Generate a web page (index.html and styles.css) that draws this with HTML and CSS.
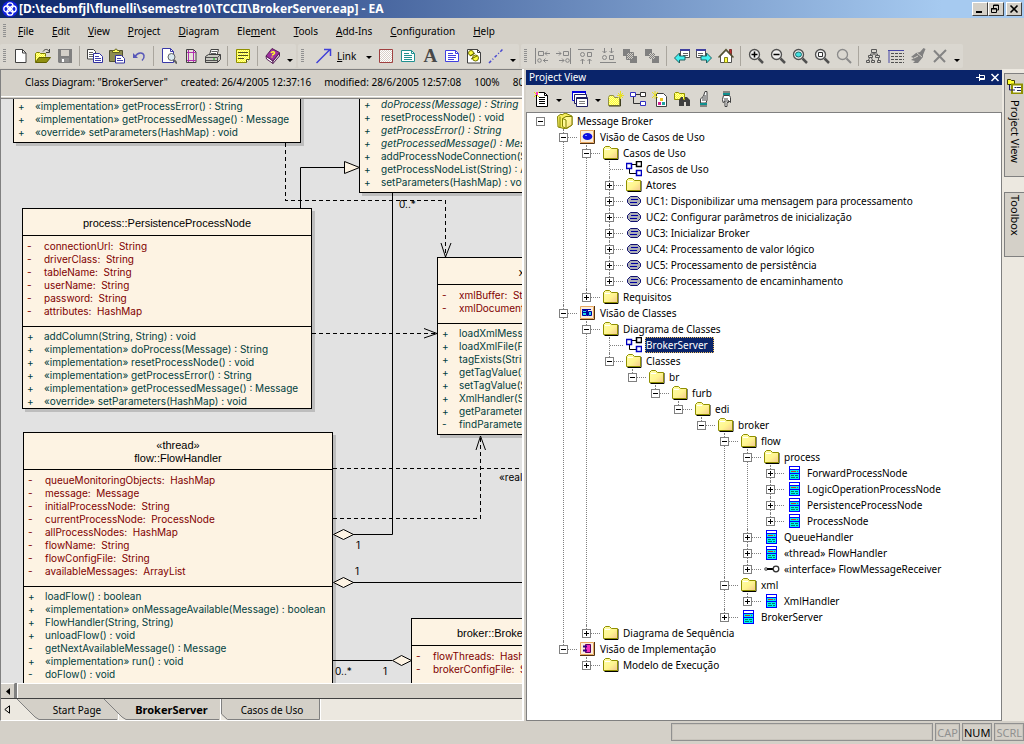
FILE: index.html
```html
<!DOCTYPE html>
<html lang="en">
<head>
<meta charset="utf-8">
<title>[D:\tecbmfjl\flunelli\semestre10\TCCII\BrokerServer.eap] - EA</title>
<link rel="stylesheet" href="styles.css">
</head>
<body>
<svg class="defs" aria-hidden="true">
  <defs>
    <pattern id="dith" width="2" height="2" patternUnits="userSpaceOnUse"><rect width="2" height="2" fill="#ffffa0"/><path d="M0 0h1v1H0zM1 1h1v1H1z" fill="#ffff30"/></pattern>
    <pattern id="dithg" width="2" height="2" patternUnits="userSpaceOnUse"><rect width="2" height="2" fill="#d4d0c8"/><path d="M0 0h1v1H0zM1 1h1v1H1z" fill="#808080"/></pattern>
    <pattern id="dithw" width="2" height="2" patternUnits="userSpaceOnUse"><rect width="2" height="2" fill="#fff"/><path d="M0 0h1v1H0zM1 1h1v1H1z" fill="#d8d0c8"/></pattern>
    <linearGradient id="fold" x1="0" y1="0" x2="1" y2="1"><stop offset="0" stop-color="#ffffa8"/><stop offset=".55" stop-color="#fff590"/><stop offset="1" stop-color="#f4c890"/></linearGradient>
  </defs>
  <symbol id="new" viewBox="0 0 16 16"><path d="M2.500 1.500h7l3.500 3.500v9.500H2.500z" fill="#fff" stroke="#404040"/><path d="M9.500 1.500v3.500H13" fill="none" stroke="#404040"/></symbol>
  <symbol id="open" viewBox="0 0 16 16"><path d="M.5 14V5.500l1-1h3l1 1h5v3" fill="url(#dith)" stroke="#808000"/><path d="M.5 14.500 4 9.500h11.500L11.500 14.500z" fill="#909010" stroke="#606000"/><path d="M8 3.500c2-3 5-2.500 6 0M14.500 1v3.500H11" fill="none" stroke="#404040"/></symbol>
  <symbol id="save" viewBox="0 0 16 16"><path d="M1 1h14v14H2l-1-1z" fill="#808080"/><path d="M4 2h8v6H4z" fill="#d4d0c8"/><path d="M4 10h8v4H4z" fill="#909090"/><path d="M5 11h2v3H5z" fill="#fff"/></symbol>
  <symbol id="copy" viewBox="0 0 16 16"><path d="M.5 1.500h6l2 2v7.500h-8z" fill="#fff" stroke="#404040"/><path d="M2 4.500h4M2 6.500h4M2 8.500h4" stroke="#606060"/><path d="M6.500 5.500h6l3 3v6h-9z" fill="#fff" stroke="#3030a0"/><path d="M8 8.500h4M8 10.500h6M8 12.500h6" stroke="#4040b0"/></symbol>
  <symbol id="paste" viewBox="0 0 16 16"><path d="M.5 2.500h13v11H.5z" fill="#8c8c50" stroke="#505030"/><path d="M3.500 4.500v-2h2l1-1.500h1l1 1.500h2v2z" fill="#ffff60" stroke="#606020"/><path d="M6.500 7.500h6l3 3v4.500h-9z" fill="#fff" stroke="#3030a0"/><path d="M8 10.500h4M8 12.500h6" stroke="#4040b0"/></symbol>
  <symbol id="undo" viewBox="0 0 16 16"><path d="M2 5v5h5z" fill="#5858b8"/><path d="M4 8.500C7 4 12 4 13 7.500c.5 2-.5 3.500-2 5" fill="none" stroke="#5858b8" stroke-width="1.500"/></symbol>
  <symbol id="preview" viewBox="0 0 16 16"><path d="M1.500.5h8l3 3v11h-11z" fill="#fff" stroke="#3838a8"/><path d="M9.500.5v3h3" fill="none" stroke="#3838a8"/><circle cx="10.500" cy="9" r="3.500" fill="#d8e8f0" stroke="#606060"/><path d="m13 12 3 3.500" stroke="#606060" stroke-width="2"/></symbol>
  <symbol id="page" viewBox="0 0 16 16"><path d="M3.500 1.500h7l2.500 2.500v10.500H3.500z" fill="#e8e4dc" stroke="#404040"/><path d="M5.500 2v12M10.500 2v12M4 4.500h9M4 12.500h9" stroke="#b030b0" fill="none"/></symbol>
  <symbol id="print" viewBox="0 0 16 16"><path d="m4.500 7 1.500-5.500h7.500L12 7z" fill="#fff" stroke="#404040"/><path d="M6.500 3.500H12M6 5.500h5" stroke="#606060"/><path d="m.5 8.500 3-2h12v5l-3 3H.5z" fill="#c8c8c0" stroke="#404040"/><path d="M.5 9.500h12v5M12.500 9.500l3-3M1 12.500h11" fill="none" stroke="#505050"/><path d="M8 11h2" stroke="#00c000"/></symbol>
  <symbol id="note" viewBox="0 0 16 16"><path d="M1.500 1.500h13v10l-3 3h-10z" fill="url(#dith)" stroke="#909000"/><path d="M3 4.500h10M3 7.500h10M3 10.500h6" stroke="#505020"/><path d="M11.500 14.500v-3h3" fill="#fff" stroke="#505020"/></symbol>
  <symbol id="book" viewBox="0 0 16 16"><path d="m1 8 7 5v2.500L1.500 11z" fill="#fff" stroke="#582058"/><path d="m8 13 6.500-8v3L8 15.500z" fill="#e0d8e0" stroke="#582058"/><path d="m1 8 6-7.500 7.500 4L8 13z" fill="#a030a0" stroke="#582058"/><path d="M6 5c1-2 4-1.500 3.500.2C9 6.500 7.500 6 7.500 7.500M6.500 9h1" fill="none" stroke="#ffff30" stroke-width="1.500"/></symbol>
  <symbol id="link" viewBox="0 0 16 16"><path d="M.5 15 14 1.500M8 1.500h6.500V8" fill="none" stroke="#4040d8" stroke-width="1.500"/></symbol>
  <symbol id="rect" viewBox="0 0 16 16"><path d="M1.500 1.500h13v13h-13z" fill="url(#dithw)" stroke="#a04040"/></symbol>
  <symbol id="tnote" viewBox="0 0 16 16"><path d="M1.500 2.500h10l3 3v8h-13z" fill="#fff" stroke="#209090"/><path d="M11.500 2.500v3h3M4 5.500h5M4 7.500h8M4 9.500h8M4 11.500h8" fill="none" stroke="#209090"/></symbol>
  <symbol id="bnote" viewBox="0 0 16 16"><path d="M1.500 2.500h10l3 3v8h-13z" fill="#fff" stroke="#4040e0"/><path d="M11.500 2.500v3h3M4 5.500h5M4 7.500h8M4 9.500h8M4 11.500h6" fill="none" stroke="#4040e0"/></symbol>
  <symbol id="doclink" viewBox="0 0 16 16"><path d="M1.500 1.500h10l3 3v10.500h-13z" fill="#fff" stroke="#404040"/><path d="M11.500 1.500v3h3" fill="none" stroke="#404040"/><circle cx="5" cy="5" r="2.500" fill="#ffff40" stroke="#707000"/><circle cx="9.500" cy="10" r="3" fill="#ffff40" stroke="#707000"/><path d="m4 8 5-3M5 11l6-3" stroke="#606000"/></symbol>
  <symbol id="dash" viewBox="0 0 16 16"><path d="M1 15 15 1" stroke="#4848d0" stroke-width="1.500" stroke-dasharray="3 2 1 2"/></symbol>
  <symbol id="al" viewBox="0 0 16 16"><path d="M1.500 0v16M4.500 3.500h5v4h-5zM11 5.500h5M13 3.500l-2 2 2 2M9 12.500h5M11.500 10.500l-2 2 2 2" fill="none" stroke="#868686"/><circle cx="5.500" cy="12.500" r="1.800" fill="none" stroke="#868686"/></symbol>
  <symbol id="ar" viewBox="0 0 16 16"><path d="M14.500 0v16M7.500 3.500h5v4h-5zM0 5.500h5M3 3.500l2 2-2 2M3 12.500h5M6 10.500l2 2-2 2" fill="none" stroke="#868686"/><circle cx="11.500" cy="12.500" r="1.800" fill="none" stroke="#868686"/></symbol>
  <symbol id="at" viewBox="0 0 16 16"><path d="M0 1.500h16M9.500 4.500h4v4h-4zM4.500 16v-5M2.500 13l2-2 2 2M11.500 16v-5M9.500 13l2-2 2 2" fill="none" stroke="#868686"/><circle cx="4.500" cy="6.500" r="2" fill="none" stroke="#868686"/></symbol>
  <symbol id="ab" viewBox="0 0 16 16"><path d="M0 14.500h16M9.500 7.500h4v4h-4zM4.500 0v5M2.500 3l2 2 2-2M11.500 0v5M9.500 3l2 2 2-2" fill="none" stroke="#868686"/><circle cx="4.500" cy="9.500" r="2" fill="none" stroke="#868686"/></symbol>
  <symbol id="front" viewBox="0 0 16 16"><path d="M1 1h7v7H1zM8 8h7v7H8z" fill="#808080"/><path d="M4.500 4.500h7v7h-7z" fill="url(#dithg)" stroke="#808080"/></symbol>
  <symbol id="backw" viewBox="0 0 16 16"><path d="M1 1h7v7H1zM8 8h7v7H8z" fill="#808080"/><path d="M5 5h6v6H5z" fill="url(#dithg)"/></symbol>
  <symbol id="prev" viewBox="0 0 16 16"><path d="M6.500 1.500h9v8h-9z" fill="#fff" stroke="#505050"/><path d="M6 2h10" stroke="#4040a0" stroke-width="2"/><path d="M9 5.500h5M9 7.500h5" stroke="#606060"/><path d="m.5 10 5-5v3H11v4H5.500v3z" fill="#40f0f0" stroke="#206060"/></symbol>
  <symbol id="next" viewBox="0 0 16 16"><path d="M.5 1.500h9v8h-9z" fill="#fff" stroke="#505050"/><path d="M0 2h10" stroke="#4040a0" stroke-width="2"/><path d="M2 5.500h5M2 7.500h5" stroke="#606060"/><path d="m15.500 10-5-5v3H5v4h5.500v3z" fill="#40f0f0" stroke="#206060"/></symbol>
  <symbol id="home" viewBox="0 0 16 16"><path d="M11.500 1.500h2v6h-2z" fill="#c03030" stroke="#803030"/><path d="M2.500 8v6.500h11V8L8 2.500z" fill="#fff" stroke="#505050"/><path d="m.5 9.500 7.500-8 7.500 8" fill="none" stroke="#505030" stroke-width="1.500"/><path d="M6.500 9.500h3v5h-3z" fill="#ffff40" stroke="#808020"/></symbol>
  <symbol id="mag" viewBox="0 0 16 16"><circle cx="6.500" cy="6.500" r="5" fill="#eee" stroke="#505050" stroke-width="1.300"/><path d="m10.500 10.500 4.500 4.500" stroke="#505050" stroke-width="2.500"/></symbol>
  <symbol id="zin" viewBox="0 0 16 16"><use href="#mag"/><path d="M3.500 6.500h6M6.500 3.500v6" stroke="#000" stroke-width="1.500"/></symbol>
  <symbol id="zout" viewBox="0 0 16 16"><use href="#mag"/><path d="M3.500 6.500h6" stroke="#000" stroke-width="1.500"/></symbol>
  <symbol id="zfit" viewBox="0 0 16 16"><use href="#mag"/><ellipse cx="6.500" cy="6.500" rx="3" ry="2.500" fill="#40e0e0" stroke="#206868"/></symbol>
  <symbol id="zpage" viewBox="0 0 16 16"><use href="#mag"/><path d="M4.500 4.500h4v4h-4z" fill="#fff" stroke="#303030"/></symbol>
  <symbol id="zoff" viewBox="0 0 16 16"><circle cx="6.500" cy="6.500" r="5" fill="none" stroke="#8a8a8a" stroke-width="1.300"/><path d="m10.500 10.500 4.500 4.500" stroke="#8a8a8a" stroke-width="2"/></symbol>
  <symbol id="hier" viewBox="0 0 16 16"><path d="M5.500 1.500h5v3h-5zM2.500 7.500h4v2h-4zM9.500 7.500h4v2h-4zM.5 12.500h3v2h-3zM5.500 12.500h3v2h-3zM11.500 12.500h3v2h-3zM8 5v1.500M4.500 7V6h7v1M2.500 12l1-2M6.500 12l-1-2M12.500 12v-2" fill="none" stroke="#585858"/></symbol>
  <symbol id="list" viewBox="0 0 16 16"><path d="M0 2.500h16M1 3v12" stroke="#4848a8"/><path d="M3 5.500h13M3 8.500h13M3 11.500h13M3 14.500h13" stroke="#505050" stroke-dasharray="3 1"/></symbol>
  <symbol id="brush" viewBox="0 0 16 16"><path d="m15.500 1-2-1-3.500 4-4 1-5 4 3 1-3 2 4 1-2 2h5l5-6V7z" fill="#808080"/><path d="m7 5 5 4M4 10l4-2" stroke="#d4d0c8"/></symbol>
  <symbol id="del" viewBox="0 0 16 16"><path d="M2 2.500 13 14M14 2 2 14" stroke="#848484" stroke-width="2"/></symbol>
  <symbol id="down" viewBox="0 0 8 16"><path d="M1 8h6L4 11z" fill="#000"/></symbol>

  <symbol id="pnew" viewBox="0 0 16 16"><path d="M3.500 1.500h8l3 3v11h-11z" fill="#fff" stroke="#000"/><path d="M11.500 1.500v3h3M6 6.500h6M6 8.500h6M6 10.500h6M6 12.500h6" fill="none" stroke="#000"/><path d="m1 1 5 5M6 1 1 6" stroke="#e8e000"/><path d="M3 1h2v3H3z" fill="#ff30c0"/></symbol>
  <symbol id="stack" viewBox="0 0 16 16"><path d="M.5.500h13v9H.5z" fill="#fff" stroke="#0000e0"/><path d="M0 1h14" stroke="#0000e0" stroke-width="2"/><path d="M2.500 3.500h12v9h-12z" fill="#fff" stroke="#202060"/><path d="M4.500 6.500h11v9h-11z" fill="#fff" stroke="#202060"/><path d="M4.500 7.500h11" stroke="#202060"/><path d="M7 10.500h6M7 12.500h6" stroke="#808080"/></symbol>
  <symbol id="pfold" viewBox="0 0 16 16"><path d="M.5 14.500V6.500l1-2h4l1 2h5v8z" fill="url(#dith)" stroke="#909040"/><path d="M12.500 7v8H1" fill="none" stroke="#404020"/><path d="m10 2 5 5m0-5-5 5M12.500 0v8M9 4.500h7" stroke="#e8e020"/></symbol>
  <symbol id="pdiag" viewBox="0 0 16 16"><path d="M5 3.500h5M3.500 6v6.500H10" fill="none" stroke="#303030"/><path d="M.5 1.500h5v4h-5zM10.500 10.500h5v4h-5z" fill="#fff" stroke="#3030c0"/><path d="M10.500 1.500h5v4h-5z" fill="#fff" stroke="#303030"/></symbol>
  <symbol id="pelem" viewBox="0 0 16 16"><path d="M4.500 2.500h7l3 3v10h-10z" fill="#fff" stroke="#404040"/><path d="m0 1 6 6m0-6L0 7M3 0v8" stroke="#e8e020"/><path d="M8 7h3v3H8z" fill="#e8c020"/><path d="M6 11h3v3H6z" fill="#d02090"/><path d="M10 11h3v3h-3z" fill="#20a0a0"/></symbol>
  <symbol id="find" viewBox="0 0 16 16"><path d="M.5 8.500v-6l1-1h3l1 1h5v6z" fill="url(#dith)" stroke="#909000"/><path d="M5 15V9l2-3h2v3h2V6h2l3 3v6h-4v-4h-2v4z" fill="#404040"/></symbol>
  <symbol id="hup" viewBox="0 0 16 16"><path d="M4.500 12V8l3-3 1.500-4.500h2V9l-1 3z" fill="#fff" stroke="#404040"/><path d="M9 4v6M7 6v4" stroke="#404040"/><path d="M4 13h7" stroke="#109090" stroke-width="2"/><path d="M4 15h7" stroke="#303030"/></symbol>
  <symbol id="hdown" viewBox="0 0 16 16"><path d="M5.500 4.500h6l1 2v5l-2-2v2H9v4H7v-5l-2 1-.5-3z" fill="#fff" stroke="#404040"/><path d="M7 7v4M9 7v4" stroke="#404040"/><path d="M5 3h7" stroke="#109090" stroke-width="2"/><path d="M5 1h7" stroke="#303030"/></symbol>

  <symbol id="root" viewBox="0 0 16 16"><path d="M.5 3.500 4 1l1 1 3-2 7 3v9l-6 4-8-2z" fill="#f8f060" stroke="#808000"/><path d="M5.500 5.500 9 3.500l6 0v8.500l-6 3.500-3.500-2z" fill="url(#fold)" stroke="#808000"/><path d="M3 3.500v11M5.500 5.500 9 7v8" fill="none" stroke="#808000"/></symbol>
  <symbol id="folder" viewBox="0 0 16 16"><path d="M15 4v10.500H1.500" fill="none" stroke="#000"/><path d="M.5 13.500V3.500l2-2h4l2 2h6v10z" fill="url(#fold)" stroke="#909000"/><path d="M2 4.500h5" stroke="#fff"/></symbol>
  <symbol id="vuse" viewBox="0 0 16 16"><path d="M14.500 1v13.500H0" fill="none" stroke="#503010"/><path d="M.5 1.500h13v12H.5z" fill="#fbeedd" stroke="#e8a860"/><ellipse cx="7.500" cy="7.500" rx="4.800" ry="3.600" fill="#1010e0"/><path d="M5 6.500h2" stroke="#80a0ff"/></symbol>
  <symbol id="vclass" viewBox="0 0 16 16"><path d="M14.500 1v13.500H0" fill="none" stroke="#503010"/><path d="M.5 1.500h13v12H.5z" fill="#fbeedd" stroke="#e8a860"/><path d="M2.500 5.500h4v5h-4zM8.500 6.500h3v4h-3z" fill="#20d8e8" stroke="#0000a0"/><path d="M2 4.500h5M8 4.500h3M7.500 4v7M3 7.500h3" stroke="#0000a0"/></symbol>
  <symbol id="vimpl" viewBox="0 0 16 16"><path d="M14.500 1v13.500H0" fill="none" stroke="#503010"/><path d="M.5 1.500h13v12H.5z" fill="#fbeedd" stroke="#e8a860"/><path d="M5.500 3.500h5v8h-5z" fill="#f030c0" stroke="#600060"/><path d="M3 5.500h4M3 9.500h4" stroke="#300080" stroke-width="2"/></symbol>
  <symbol id="diag" viewBox="0 0 16 16"><path d="M5 3.500h6M3.500 7v5.500H11" fill="none" stroke="#000"/><path d="M.5 2.500h5v5h-5zM10.500 9.500h5v5h-5z" fill="#fff" stroke="#0000c0" stroke-width="1.500"/><path d="M10.500.5h5v5h-5z" fill="#fff" stroke="#000" stroke-width="1.500"/></symbol>
  <symbol id="uc" viewBox="0 0 16 16"><path d="M4.500 3.500h7l3 3v3l-3 3h-7l-3-3v-3z" fill="#acaeb6" stroke="#101070"/><path d="M5 6.500h7M4 9.500h7" stroke="#0000a0"/></symbol>
  <symbol id="cls" viewBox="0 0 16 16"><g shape-rendering="crispEdges"><path d="M2.500 1.500h10v13h-10z" fill="#00f0f0" stroke="#0000ff"/><path d="M3 2h9v2H3z" fill="#fff"/><path d="M3 4.500h9M3 8.500h9" stroke="#0000ff"/><path d="M4 6.500h5M10 6.500h1" stroke="#c04020"/><path d="M4 10.500h3M8 10.500h3M4 12.500h4M9 12.500h2" stroke="#008060"/></g></symbol>
  <symbol id="iface" viewBox="0 0 16 16"><circle cx="2" cy="8" r="1.500" fill="#909090" stroke="#808080"/><path d="M3 8h6" stroke="#000" stroke-width="2"/><circle cx="12" cy="8" r="2.800" fill="#fff" stroke="#303030" stroke-width="1.300"/></symbol>
  <symbol id="tabico" viewBox="0 0 16 16"><path d="M.5 6.500v-5h3l1 1h3v4z" fill="#ffff30" stroke="#404000"/><path d="M5 6.500h10v9H5z" fill="#fff" stroke="#909000" stroke-width="2"/><path d="M2.500 7v5H8M7.500 9.500h2M10 9.500h4M10 12.500h4" stroke="#202060" fill="none"/></symbol>
</svg>

<header class="titlebar">
  <svg class="logo" viewBox="0 0 16 16"><circle cx="8" cy="8" r="8" fill="#1020e0"/><g fill="none" stroke="#fff" stroke-width="1.300"><circle cx="8" cy="4.800" r="3"/><circle cx="11.200" cy="8" r="3"/><circle cx="8" cy="11.200" r="3"/><circle cx="4.800" cy="8" r="3"/></g></svg>
  <h1>[D:\tecbmfjl\flunelli\semestre10\TCCII\BrokerServer.eap] - EA</h1>
  <div class="winbtns">
    <button aria-label="Minimize"><svg viewBox="0 0 12 10"><path d="M2 8h6" stroke="#000" stroke-width="2"/></svg></button>
    <button aria-label="Restore"><svg viewBox="0 0 12 10"><path d="M3.500 4V1h5v5H7M3 1.500h6" fill="none" stroke="#000"/><path d="M1.500 4.500h5v4h-5zM1 5h6" fill="none" stroke="#000"/></svg></button>
    <button class="close" aria-label="Close"><svg viewBox="0 0 12 10"><path d="m2.500 1.500 7 7m0-7-7 7" stroke="#000" stroke-width="1.600"/></svg></button>
  </div>
</header>

<nav class="menubar">
  <i class="grip"></i>
  <button><u>F</u>ile</button><button><u>E</u>dit</button><button><u>V</u>iew</button><button><u>P</u>roject</button><button><u>D</u>iagram</button><button>Ele<u>m</u>ent</button><button><u>T</u>ools</button><button><u>A</u>dd-Ins</button><button><u>C</u>onfiguration</button><button><u>H</u>elp</button>
</nav>

<div class="toolbars">
  <div class="toolbar">
    <i class="grip"></i>
    <button aria-label="New"><svg><use href="#new"/></svg></button>
    <button aria-label="Open"><svg><use href="#open"/></svg></button>
    <button aria-label="Save"><svg><use href="#save"/></svg></button>
    <i class="sep"></i>
    <button aria-label="Copy"><svg><use href="#copy"/></svg></button>
    <button aria-label="Paste"><svg><use href="#paste"/></svg></button>
    <button aria-label="Undo"><svg><use href="#undo"/></svg></button>
    <i class="sep"></i>
    <button aria-label="Print preview"><svg><use href="#preview"/></svg></button>
    <button aria-label="Page setup"><svg><use href="#page"/></svg></button>
    <button aria-label="Print"><svg><use href="#print"/></svg></button>
    <i class="sep"></i>
    <button aria-label="Note"><svg><use href="#note"/></svg></button>
    <i class="sep"></i>
    <button aria-label="Help"><svg><use href="#book"/></svg></button>
    <button class="drop low" aria-label="More"><svg><use href="#down"/></svg></button>
  </div>
  <div class="toolbar">
    <i class="grip"></i>
    <button class="linkbtn"><svg><use href="#link"/></svg><span><u>L</u>ink</span></button>
    <button class="drop" aria-label="Link types"><svg><use href="#down"/></svg></button>
    <button aria-label="Boundary"><svg><use href="#rect"/></svg></button>
    <button aria-label="Note element"><svg><use href="#tnote"/></svg></button>
    <button class="letter" aria-label="Text">A</button>
    <button aria-label="Diagram note"><svg><use href="#bnote"/></svg></button>
    <button aria-label="Hyperlink"><svg><use href="#doclink"/></svg></button>
    <button aria-label="Note link"><svg><use href="#dash"/></svg></button>
    <button class="drop low" aria-label="More"><svg><use href="#down"/></svg></button>
  </div>
  <div class="toolbar">
    <i class="grip"></i>
    <button aria-label="Align left"><svg><use href="#al"/></svg></button>
    <button aria-label="Align right"><svg><use href="#ar"/></svg></button>
    <button aria-label="Align top"><svg><use href="#at"/></svg></button>
    <button aria-label="Align bottom"><svg><use href="#ab"/></svg></button>
    <button aria-label="Bring to front"><svg><use href="#front"/></svg></button>
    <button aria-label="Send to back"><svg><use href="#backw"/></svg></button>
    <i class="sep"></i>
    <button aria-label="Previous"><svg><use href="#prev"/></svg></button>
    <button aria-label="Next"><svg><use href="#next"/></svg></button>
    <button aria-label="Home"><svg><use href="#home"/></svg></button>
    <i class="sep"></i>
    <button aria-label="Zoom in"><svg><use href="#zin"/></svg></button>
    <button aria-label="Zoom out"><svg><use href="#zout"/></svg></button>
    <button aria-label="Fit to window"><svg><use href="#zfit"/></svg></button>
    <button aria-label="Fit to page"><svg><use href="#zpage"/></svg></button>
    <button aria-label="Zoom 100%"><svg><use href="#zoff"/></svg></button>
    <i class="sep"></i>
    <button aria-label="Layout"><svg><use href="#hier"/></svg></button>
    <button aria-label="Properties"><svg><use href="#list"/></svg></button>
    <button aria-label="Format"><svg><use href="#brush"/></svg></button>
    <button aria-label="Delete"><svg><use href="#del"/></svg></button>
    <button class="drop low" aria-label="More"><svg><use href="#down"/></svg></button>
  </div>
</div>

<main class="work">
  <section class="editor">
    <div class="info"><span>Class Diagram: "BrokerServer"</span><span>created: 26/4/2005 12:37:16</span><span>modified: 28/6/2005 12:57:08</span><span>100%</span><span>800 x 1100</span></div>
    <div class="canvas">
      <article class="uml" style="left:12px;top:-3px;width:288px">
        <ul class="ops">
          <li><b>+</b>«implementation» getProcessError() : String</li>
          <li><b>+</b>«implementation» getProcessedMessage() : Message</li>
          <li><b>+</b>«override» setParameters(HashMap) : void</li>
        </ul>
      </article>

      <article class="uml" style="left:358px;top:-5px;width:290px">
        <ul class="ops">
          <li class="abs"><b>+</b>doProcess(Message) : String</li>
          <li><b>+</b>resetProcessNode() : void</li>
          <li class="abs"><b>+</b>getProcessError() : String</li>
          <li class="abs"><b>+</b>getProcessedMessage() : Message</li>
          <li><b>+</b>addProcessNodeConnection(String) : void</li>
          <li><b>+</b>getProcessNodeList(String) : ArrayList</li>
          <li><b>+</b>setParameters(HashMap) : void</li>
        </ul>
      </article>

      <article class="uml" style="left:21px;top:109px;width:290px">
        <h2>process::PersistenceProcessNode</h2>
        <ul class="attrs">
          <li><b>-</b>connectionUrl:&nbsp; String</li>
          <li><b>-</b>driverClass:&nbsp; String</li>
          <li><b>-</b>tableName:&nbsp; String</li>
          <li><b>-</b>userName:&nbsp; String</li>
          <li><b>-</b>password:&nbsp; String</li>
          <li><b>-</b>attributes:&nbsp; HashMap</li>
        </ul>
        <ul class="ops tight">
          <li><b>+</b>addColumn(String, String) : void</li>
          <li><b>+</b>«implementation» doProcess(Message) : String</li>
          <li><b>+</b>«implementation» resetProcessNode() : void</li>
          <li><b>+</b>«implementation» getProcessError() : String</li>
          <li><b>+</b>«implementation» getProcessedMessage() : Message</li>
          <li><b>+</b>«override» setParameters(HashMap) : void</li>
        </ul>
      </article>

      <article class="uml" style="left:22px;top:333px;width:310px">
        <h2 class="two">«thread»<br>flow::FlowHandler</h2>
        <ul class="attrs">
          <li><b>-</b>queueMonitoringObjects:&nbsp; HashMap</li>
          <li><b>-</b>message:&nbsp; Message</li>
          <li><b>-</b>initialProcessNode:&nbsp; String</li>
          <li><b>-</b>currentProcessNode:&nbsp; ProcessNode</li>
          <li><b>-</b>allProcessNodes:&nbsp; HashMap</li>
          <li><b>-</b>flowName:&nbsp; String</li>
          <li><b>-</b>flowConfigFile:&nbsp; String</li>
          <li><b>-</b>availableMessages:&nbsp; ArrayList</li>
        </ul>
        <ul class="ops">
          <li><b>+</b>loadFlow() : boolean</li>
          <li><b>+</b>«implementation» onMessageAvailable(Message) : boolean</li>
          <li><b>+</b>FlowHandler(String, String)</li>
          <li><b>+</b>unloadFlow() : void</li>
          <li><b>-</b>getNextAvailableMessage() : Message</li>
          <li><b>+</b>«implementation» run() : void</li>
          <li><b>-</b>doFlow() : void</li>
          <li></li>
        </ul>
      </article>

      <article class="uml" style="left:436px;top:158px;width:244px">
        <h2>xml::XmlHandler</h2>
        <ul class="attrs">
          <li><b>-</b>xmlBuffer:&nbsp; StringBuffer</li>
          <li><b>-</b>xmlDocument:&nbsp; Document</li>
        </ul>
        <ul class="ops">
          <li><b>+</b>loadXmlMessage(String) : void</li>
          <li><b>+</b>loadXmlFile(File) : void</li>
          <li><b>+</b>tagExists(String) : boolean</li>
          <li><b>+</b>getTagValue(String) : String</li>
          <li><b>+</b>setTagValue(String) : void</li>
          <li><b>+</b>XmlHandler(String)</li>
          <li><b>+</b>getParameter(String) : String</li>
          <li><b>-</b>findParameter(String) : Node</li>
        </ul>
      </article>

      <article class="uml" style="left:410px;top:519px;width:194px">
        <h2>broker::BrokerServer</h2>
        <ul class="attrs">
          <li><b>-</b>flowThreads:&nbsp; HashMap</li>
          <li><b>-</b>brokerConfigFile:&nbsp; String</li>
          <li></li>
        </ul>
      </article>

      <svg class="wires">
        <g transform="translate(-1 -99)" fill="none" stroke="#000">
          <path class="dashed" d="M285.500 143v57.500h160V257"/>
          <path d="m441 243 4.500 14 5.500-14"/>
          <path d="M300.500 208v-40.500H344"/>
          <path class="fill" d="M344.500 161.500v12l15-6z"/>
          <path d="M392.500 193v341.500H353"/>
          <path class="dashed" d="M312 333.500h125"/>
          <path d="m424 328.500 13 5-13 4.500"/>
          <path class="dashed" d="M333 468.500h192"/>
          <path class="dashed" d="M333 518.500h147.500V436"/>
          <path d="m476 450 4.500-14 5 14"/>
          <path class="fill" d="m333.500 534.500 10-5 10 5-10 5z"/>
          <path class="fill" d="m333.500 582.500 10-5 10 5-10 5zM353 582.500h172"/>
          <path d="M333 660.500h59"/>
          <path class="fill" d="m392.500 660.500 9-5 10 5-10 5z"/>
        </g>
        <g transform="translate(-1 -99)" class="ends">
          <text x="399" y="208">0..*</text>
          <text x="499" y="481">«realize»</text>
          <text x="356" y="549">1</text>
          <text x="355" y="575">1</text>
          <text x="335" y="675">0..*</text>
          <text x="383" y="675">1</text>
        </g>
      </svg>
    </div>
    <div class="hscroll">
      <button aria-label="Scroll left"><svg viewBox="0 0 4 7"><path d="M4 0v7L0 3.500z"/></svg></button>
      <div class="thumb"></div>
    </div>
    <div class="tabs">
      <button class="scrolltabs" aria-label="Previous tabs"><svg viewBox="0 0 6 9"><path d="M5.500.8v7.400L.8 4.500z" fill="none" stroke="#000"/></svg></button>
      <button class="tab first"><svg viewBox="0 0 102 21"><path d="M0 0l18 18 4 3h79V0z" fill="#d4d0c8"/><path d="M0 0l18 18 4 2.500h78" fill="none" stroke="#808080"/><path d="M101.500 14v7" stroke="#fff"/></svg>Start Page</button>
      <button class="tab active"><svg viewBox="0 0 117 21"><path d="M0 0l18 18 4 3h94V0z" fill="#d4d0c8"/><path d="M0 0l18 18 4 2.500h93" fill="none" stroke="#808080"/><path d="M116.500 0v21" stroke="#fff"/></svg>BrokerServer</button>
      <button class="tab last"><svg viewBox="0 0 100 21"><path d="M0 0v15l6 6h93V0z" fill="#d4d0c8"/><path d="M.5 0v15l6 5.500h92V0" fill="none" stroke="#808080"/><path d="M99.500 0v21" stroke="#fff"/></svg>Casos de Uso</button>
    </div>
  </section>

  <aside class="project">
    <div class="ptitle"><h2>Project View</h2>
      <button aria-label="Pin"><svg viewBox="0 0 10 9"><path d="M0 4.500h3M3.500 1v7M3.500 2.500h5v4h-5M3.500 5.500h5" fill="none" stroke="#fff"/></svg></button>
      <button aria-label="Close panel"><svg viewBox="0 0 10 9"><path d="m1.500 1 7 7m0-7-7 7" stroke="#fff" stroke-width="1.500"/></svg></button>
    </div>
    <div class="ptools">
      <button aria-label="New view"><svg><use href="#pnew"/></svg></button><button class="drop" aria-label="New view options"><svg><use href="#down"/></svg></button>
      <button class="gap" aria-label="Windows"><svg><use href="#stack"/></svg></button><button class="drop" aria-label="Window options"><svg><use href="#down"/></svg></button>
      <button aria-label="New package"><svg><use href="#pfold"/></svg></button>
      <button aria-label="New diagram"><svg><use href="#pdiag"/></svg></button>
      <button aria-label="New element"><svg><use href="#pelem"/></svg></button>
      <button aria-label="Find"><svg><use href="#find"/></svg></button>
      <button aria-label="Move up"><svg><use href="#hup"/></svg></button>
      <button aria-label="Move down"><svg><use href="#hdown"/></svg></button>
    </div>
    <div class="treebox">
      <ul class="tree">
        <li><div class="row"><button class="ex" aria-label="Collapse"></button><svg><use href="#root"/></svg><span>Message Broker</span></div>
        <ul>
          <li><div class="row"><button class="ex" aria-label="Collapse"></button><svg><use href="#vuse"/></svg><span>Visão de Casos de Uso</span></div>
          <ul>
            <li><div class="row"><button class="ex" aria-label="Collapse"></button><svg><use href="#folder"/></svg><span>Casos de Uso</span></div>
            <ul>
              <li><div class="row leaf"><svg><use href="#diag"/></svg><span>Casos de Uso</span></div></li>
              <li><div class="row"><button class="ex plus" aria-label="Expand"></button><svg><use href="#folder"/></svg><span>Atores</span></div></li>
              <li><div class="row"><button class="ex plus" aria-label="Expand"></button><svg><use href="#uc"/></svg><span>UC1: Disponibilizar uma mensagem para processamento</span></div></li>
              <li><div class="row"><button class="ex plus" aria-label="Expand"></button><svg><use href="#uc"/></svg><span>UC2: Configurar parâmetros de inicialização</span></div></li>
              <li><div class="row"><button class="ex plus" aria-label="Expand"></button><svg><use href="#uc"/></svg><span>UC3: Inicializar Broker</span></div></li>
              <li><div class="row"><button class="ex plus" aria-label="Expand"></button><svg><use href="#uc"/></svg><span>UC4: Processamento de valor lógico</span></div></li>
              <li><div class="row"><button class="ex plus" aria-label="Expand"></button><svg><use href="#uc"/></svg><span>UC5: Processamento de persistência</span></div></li>
              <li><div class="row"><button class="ex plus" aria-label="Expand"></button><svg><use href="#uc"/></svg><span>UC6: Processamento de encaminhamento</span></div></li>
            </ul></li>
            <li><div class="row"><button class="ex plus" aria-label="Expand"></button><svg><use href="#folder"/></svg><span>Requisitos</span></div></li>
          </ul></li>
          <li><div class="row"><button class="ex" aria-label="Collapse"></button><svg><use href="#vclass"/></svg><span>Visão de Classes</span></div>
          <ul>
            <li><div class="row"><button class="ex" aria-label="Collapse"></button><svg><use href="#folder"/></svg><span>Diagrama de Classes</span></div>
            <ul>
              <li><div class="row leaf"><svg><use href="#diag"/></svg><span class="sel">BrokerServer</span></div></li>
              <li><div class="row"><button class="ex" aria-label="Collapse"></button><svg><use href="#folder"/></svg><span>Classes</span></div>
              <ul><li><div class="row"><button class="ex" aria-label="Collapse"></button><svg><use href="#folder"/></svg><span>br</span></div>
              <ul><li><div class="row"><button class="ex" aria-label="Collapse"></button><svg><use href="#folder"/></svg><span>furb</span></div>
              <ul><li><div class="row"><button class="ex" aria-label="Collapse"></button><svg><use href="#folder"/></svg><span>edi</span></div>
              <ul><li><div class="row"><button class="ex" aria-label="Collapse"></button><svg><use href="#folder"/></svg><span>broker</span></div>
              <ul>
                <li><div class="row"><button class="ex" aria-label="Collapse"></button><svg><use href="#folder"/></svg><span>flow</span></div>
                <ul>
                  <li><div class="row"><button class="ex" aria-label="Collapse"></button><svg><use href="#folder"/></svg><span>process</span></div>
                  <ul>
                    <li><div class="row"><button class="ex plus" aria-label="Expand"></button><svg><use href="#cls"/></svg><span>ForwardProcessNode</span></div></li>
                    <li><div class="row"><button class="ex plus" aria-label="Expand"></button><svg><use href="#cls"/></svg><span>LogicOperationProcessNode</span></div></li>
                    <li><div class="row"><button class="ex plus" aria-label="Expand"></button><svg><use href="#cls"/></svg><span>PersistenceProcessNode</span></div></li>
                    <li><div class="row"><button class="ex plus" aria-label="Expand"></button><svg><use href="#cls"/></svg><span>ProcessNode</span></div></li>
                  </ul></li>
                  <li><div class="row"><button class="ex plus" aria-label="Expand"></button><svg><use href="#cls"/></svg><span>QueueHandler</span></div></li>
                  <li><div class="row"><button class="ex plus" aria-label="Expand"></button><svg><use href="#cls"/></svg><span>«thread» FlowHandler</span></div></li>
                  <li><div class="row"><button class="ex plus" aria-label="Expand"></button><svg><use href="#iface"/></svg><span>«interface» FlowMessageReceiver</span></div></li>
                </ul></li>
                <li><div class="row"><button class="ex" aria-label="Collapse"></button><svg><use href="#folder"/></svg><span>xml</span></div>
                <ul>
                  <li><div class="row"><button class="ex plus" aria-label="Expand"></button><svg><use href="#cls"/></svg><span>XmlHandler</span></div></li>
                </ul></li>
                <li><div class="row"><button class="ex plus" aria-label="Expand"></button><svg><use href="#cls"/></svg><span>BrokerServer</span></div></li>
              </ul></li></ul></li></ul></li></ul></li></ul></li>
            </ul></li>
            <li><div class="row"><button class="ex plus" aria-label="Expand"></button><svg><use href="#folder"/></svg><span>Diagrama de Sequência</span></div></li>
          </ul></li>
          <li><div class="row"><button class="ex" aria-label="Collapse"></button><svg><use href="#vimpl"/></svg><span>Visão de Implementação</span></div>
          <ul>
            <li><div class="row"><button class="ex plus" aria-label="Expand"></button><svg><use href="#folder"/></svg><span>Modelo de Execução</span></div></li>
          </ul></li>
        </ul></li>
      </ul>
    </div>
  </aside>

  <nav class="side">
    <button><svg><use href="#tabico"/></svg><span>Project View</span></button>
    <button class="plain"><span>Toolbox</span></button>
  </nav>
</main>

<footer class="status">
  <div class="cell msg"></div><div class="cell off">CAP</div><div class="cell">NUM</div><div class="cell off">SCRL</div>
</footer>
</body>
</html>
```
FILE: styles.css
```css
* { box-sizing: border-box; }
html, body { height: 100%; }
body {
  margin: 0;
  display: flex;
  flex-direction: column;
  overflow: hidden;
  background: #d4d0c8;
  color: #000;
  font: 10px/16px "Noto Sans", sans-serif;
}
button {
  margin: 0; padding: 0; border: 0;
  background: none; color: inherit; font: inherit;
}
ul { list-style: none; margin: 0; padding: 0; }
h1, h2 { margin: 0; }
svg { display: block; flex: none; }
.defs { position: absolute; width: 0; height: 0; }

/* Title bar */
.titlebar {
  flex: none;
  display: flex; align-items: center; gap: 1px;
  height: 18px; padding: 0 2px;
  background: linear-gradient(90deg, #0a246a, #a6caf0 92%);
  color: #fff;
}
.logo { width: 16px; height: 16px; }
.titlebar h1 { flex: 1; font-size: 12px; line-height: 18px; white-space: nowrap; overflow: hidden; }
.winbtns { display: flex; gap: 0; }
.winbtns button {
  width: 16px; height: 14px; padding: 1px 1px;
  background: #d4d0c8;
  border: 1px solid; border-color: #fff #404040 #404040 #fff;
}
.winbtns .close { margin-left: 2px; }
.winbtns svg { width: 12px; height: 10px; }

/* Menu */
.menubar { flex: none; display: flex; align-items: center; gap: 18px; height: 26px; padding-left: 3px; }
.grip {
  flex: none; width: 3px; height: 14px;
  background: repeating-linear-gradient(#909090 0 1px, transparent 1px 2px);
}
.menubar .grip { margin-right: -6px; }
.menubar button { line-height: 16px; }

/* Toolbars */
.toolbars { flex: none; display: flex; height: 25px; gap: 2px; padding: 0 0 1px; }
.toolbar { display: flex; align-items: center; background: #dad7d0; padding-left: 3px; border-radius: 2px; }
.toolbar .grip { margin-right: 4px; }
.toolbar button { flex: none; width: 22px; height: 22px; display: flex; align-items: center; justify-content: center; }
.toolbar svg, .ptools svg { width: 16px; height: 16px; }
.toolbar .drop, .ptools .drop { width: 12px; }
.toolbar .drop svg, .ptools .drop svg { width: 8px; height: 16px; }
.toolbar .low { align-items: flex-end; }
.toolbar .linkbtn { width: auto; gap: 5px; padding: 0 7px 0 8px; }
.toolbar .letter { font: bold 19px "Liberation Serif", serif; color: #484848; }
.sep { flex: none; width: 1px; height: 20px; margin: 0 4px 0 3px; background: #aaa69e; }

/* Work area */
.work { flex: 1; display: flex; min-height: 0; }
.editor {
  flex: 1; min-width: 0;
  display: flex; flex-direction: column;
  border-left: 1px solid #808080;
  border-right: 2px solid #fff;
  border-bottom: 1px solid #fff;
  margin-right: 2px;
}
.info {
  flex: none; display: flex; align-items: center; gap: 13px;
  height: 28px; padding: 0 0 2px 24px; margin-bottom: 1px;
  border-top: 1px solid #808080; border-bottom: 1px solid #fff;
  white-space: nowrap; overflow: hidden;
}
.canvas {
  flex: 1; min-height: 0; position: relative; overflow: hidden;
  border-top: 1px solid #808080;
  background: #e2e2e2;
}
.wires { position: absolute; top: 0; left: 0; width: 100%; height: 100%; }
.wires .dashed { stroke-dasharray: 4 3; shape-rendering: crispEdges; }
.wires .fill { fill: #fdf3e3; }
.ends { font: 10px Inter, sans-serif; }
.uml {
  position: absolute;
  border: 1px solid #000;
  background: #fdf3e3;
  box-shadow: 3px 3px 0 #bdbdbd;
  font: 10px/13px Inter, sans-serif;
  white-space: nowrap;
}
.uml h2 {
  padding: 8px 0 5px;
  font: 11px/13px "Liberation Sans", sans-serif;
  text-align: center;
}
.uml .two { padding: 6px 0 4px; }
.uml li { display: flex; height: 13px; }
.uml b { flex: none; width: 18px; padding-left: 1px; font-weight: inherit; }
.uml .abs { font-style: italic; }
.attrs { padding: 4px 3px 8px; color: #800000; border-top: 1px solid #000; }
.ops { padding: 3px; color: #004040; }
.tight { padding-bottom: 0; }
.attrs + .ops { border-top: 1px solid #000; }

.hscroll { flex: none; display: flex; gap: 2px; height: 16px; border-bottom: 1px solid #404040; background: #808080; }
.hscroll button { width: 14px; padding: 0 4px 0 5px; background: #d4d0c8; border-top: 1px solid #fff; border-right: 1px solid #808080; }
.hscroll button svg { width: 4px; height: 7px; }
.thumb { flex: 1; background: #d4d0c8; border-top: 1px solid #fff; border-left: 1px solid #fff; }

.tabs { flex: none; display: flex; height: 21px; background: #ece8e0; }
.scrolltabs { width: 16px; padding-left: 3px; }
.scrolltabs svg { width: 6px; height: 9px; }
.tab { position: relative; z-index: 0; line-height: 20px; }
.tab svg { position: absolute; z-index: -1; left: 0; top: 0; width: 100%; height: 21px; }
.first { width: 102px; padding-left: 18px; }
.active { width: 117px; margin-left: -15px; padding-left: 18px; font-weight: bold; font-size: 11px; }
.last { width: 100px; padding-left: 2px; }

/* Project panel */
.project { flex: none; width: 476px; display: flex; flex-direction: column; padding-top: 1px; }
.ptitle { flex: none; display: flex; align-items: center; height: 15px; padding: 0 2px 0 3px; gap: 4px; background: #0a246a; color: #fff; }
.ptitle h2 { flex: 1; font-size: 10px; line-height: 15px; font-weight: normal; }
.ptitle svg { width: 10px; height: 9px; }
.ptools { flex: none; display: flex; align-items: center; height: 27px; padding-left: 4px; background: #dad7d0; }
.ptools button { flex: none; width: 22px; display: flex; justify-content: center; }
.ptools .drop { width: 14px; }
.ptools .gap { margin-left: 3px; }
.treebox { flex: 1; min-height: 0; padding-left: 2px; background: #fff; border: 1px solid #808080; overflow: hidden; }
.tree ul { margin-left: 23px; }
.tree li { position: relative; }
.tree ul > li::before {
  content: ""; position: absolute; left: 11px; top: 0; bottom: 0;
  border-left: 1px dotted #808080;
}
.tree ul > li:last-child::before { bottom: auto; height: 8px; }
.row { position: relative; display: flex; align-items: center; height: 16px; padding-left: 28px; white-space: nowrap; }
.tree ul .row::before {
  content: ""; position: absolute; left: 12px; top: 8px; width: 13px;
  border-top: 1px dotted #808080;
}
.row svg { width: 16px; height: 16px; margin-right: 3px; }
.row span { padding: 0 1px; }
.row .sel { padding-right: 6px; background: #0a246a; color: #fff; outline: 1px dotted #f0c060; outline-offset: -1px; }
.ex {
  position: absolute; left: 7px; top: 4px;
  width: 9px; height: 9px;
  border: 1px solid #808080;
  background: linear-gradient(#000, #000) center / 5px 1px no-repeat, #fff;
}
.plus {
  background: linear-gradient(#000, #000) center / 5px 1px no-repeat,
    linear-gradient(#000, #000) center / 1px 5px no-repeat, #fff;
}

/* Docked side tabs */
.side { flex: none; width: 22px; padding: 4px 0 0 2px; display: flex; flex-direction: column; gap: 15px; background: #ece8e0; }
.side button {
  width: 20px; padding: 4px 0 13px;
  display: flex; flex-direction: column; align-items: center; gap: 6px;
  background: #d4d0c8;
  border: 1px solid #808080; border-right: 0;
  font-size: 11px;
}
.side svg { width: 16px; height: 16px; }
.side span { writing-mode: vertical-rl; line-height: 16px; }
.side .plain { padding: 2px 0 21px; }

/* Status bar */
.status { flex: none; display: flex; gap: 2px; height: 23px; padding: 2px 0 3px 671px; justify-content: flex-end; font-size: 11px; }
.cell { flex: none; padding: 0 1px; line-height: 17px; border: 1px solid #909090; box-shadow: inset 0 0 0 1px #c8c4bc; }
.msg { flex: 1; }
.off { color: #909090; }
```
